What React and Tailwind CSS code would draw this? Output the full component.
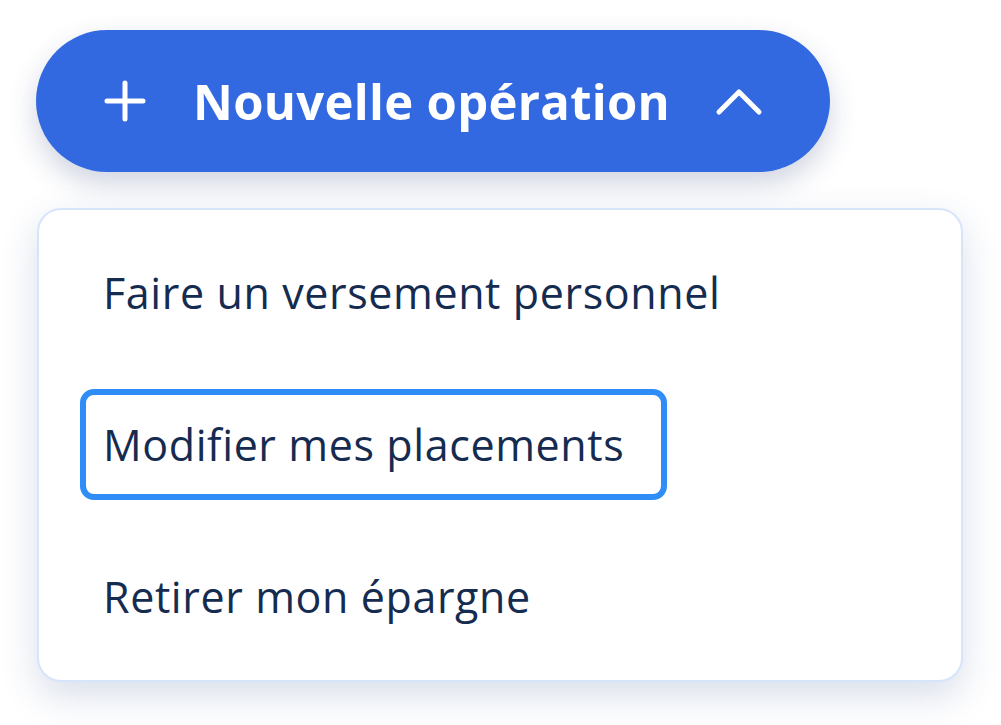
import { useState } from 'react';

const ITEMS = [
  'Faire un versement personnel',
  'Modifier mes placements',
  'Retirer mon épargne',
];

function PlusIcon() {
  return (
    <svg width="42" height="42" viewBox="0 0 42 42" fill="none" stroke="currentColor" strokeWidth="5" strokeLinecap="round">
      <path d="M21 3v36M3 21h36" />
    </svg>
  );
}

function ChevronUp() {
  return (
    <svg width="48" height="30" viewBox="0 0 48 30" fill="none" stroke="currentColor" strokeWidth="5" strokeLinecap="round" strokeLinejoin="round">
      <path d="M4 26L24 6l20 20" />
    </svg>
  );
}

export default function App() {
  const [focused] = useState(1);

  return (
    <div className="min-h-screen w-[1001px] h-[725px] bg-white font-['Open_Sans',sans-serif] pt-[30px] pl-[36px]">
      <button className="flex items-center w-[794px] h-[142px] rounded-full bg-[#3369E0] text-white pl-[68px] shadow-[0_12px_28px_rgba(40,60,120,0.22)]">
        <PlusIcon />
        <span className="ml-[47px] text-[49px] font-bold tracking-[0.3px] leading-none">Nouvelle opération</span>
        <span className="ml-[45px] flex items-center"><ChevronUp /></span>
      </button>

      <div className="mt-[36px] ml-px w-[926px] h-[474px] rounded-[24px] bg-white border-2 border-[#D6E5F9] shadow-[0_14px_36px_rgba(40,70,140,0.18)] pt-[27px] pl-[41px] flex flex-col gap-[41px]">
        {ITEMS.map((label, i) => (
          <div
            key={label}
            className={`w-fit h-[111px] flex items-center pl-[23px] pr-[43px] rounded-[14px] text-[43px] tracking-[0.6px] text-[#152B50] leading-none ${
              i === focused ? 'outline-[6px] outline-solid outline-[#2F8DF7] -outline-offset-[6px]' : ''
            }`}
          >
            {label}
          </div>
        ))}
      </div>
    </div>
  );
}
